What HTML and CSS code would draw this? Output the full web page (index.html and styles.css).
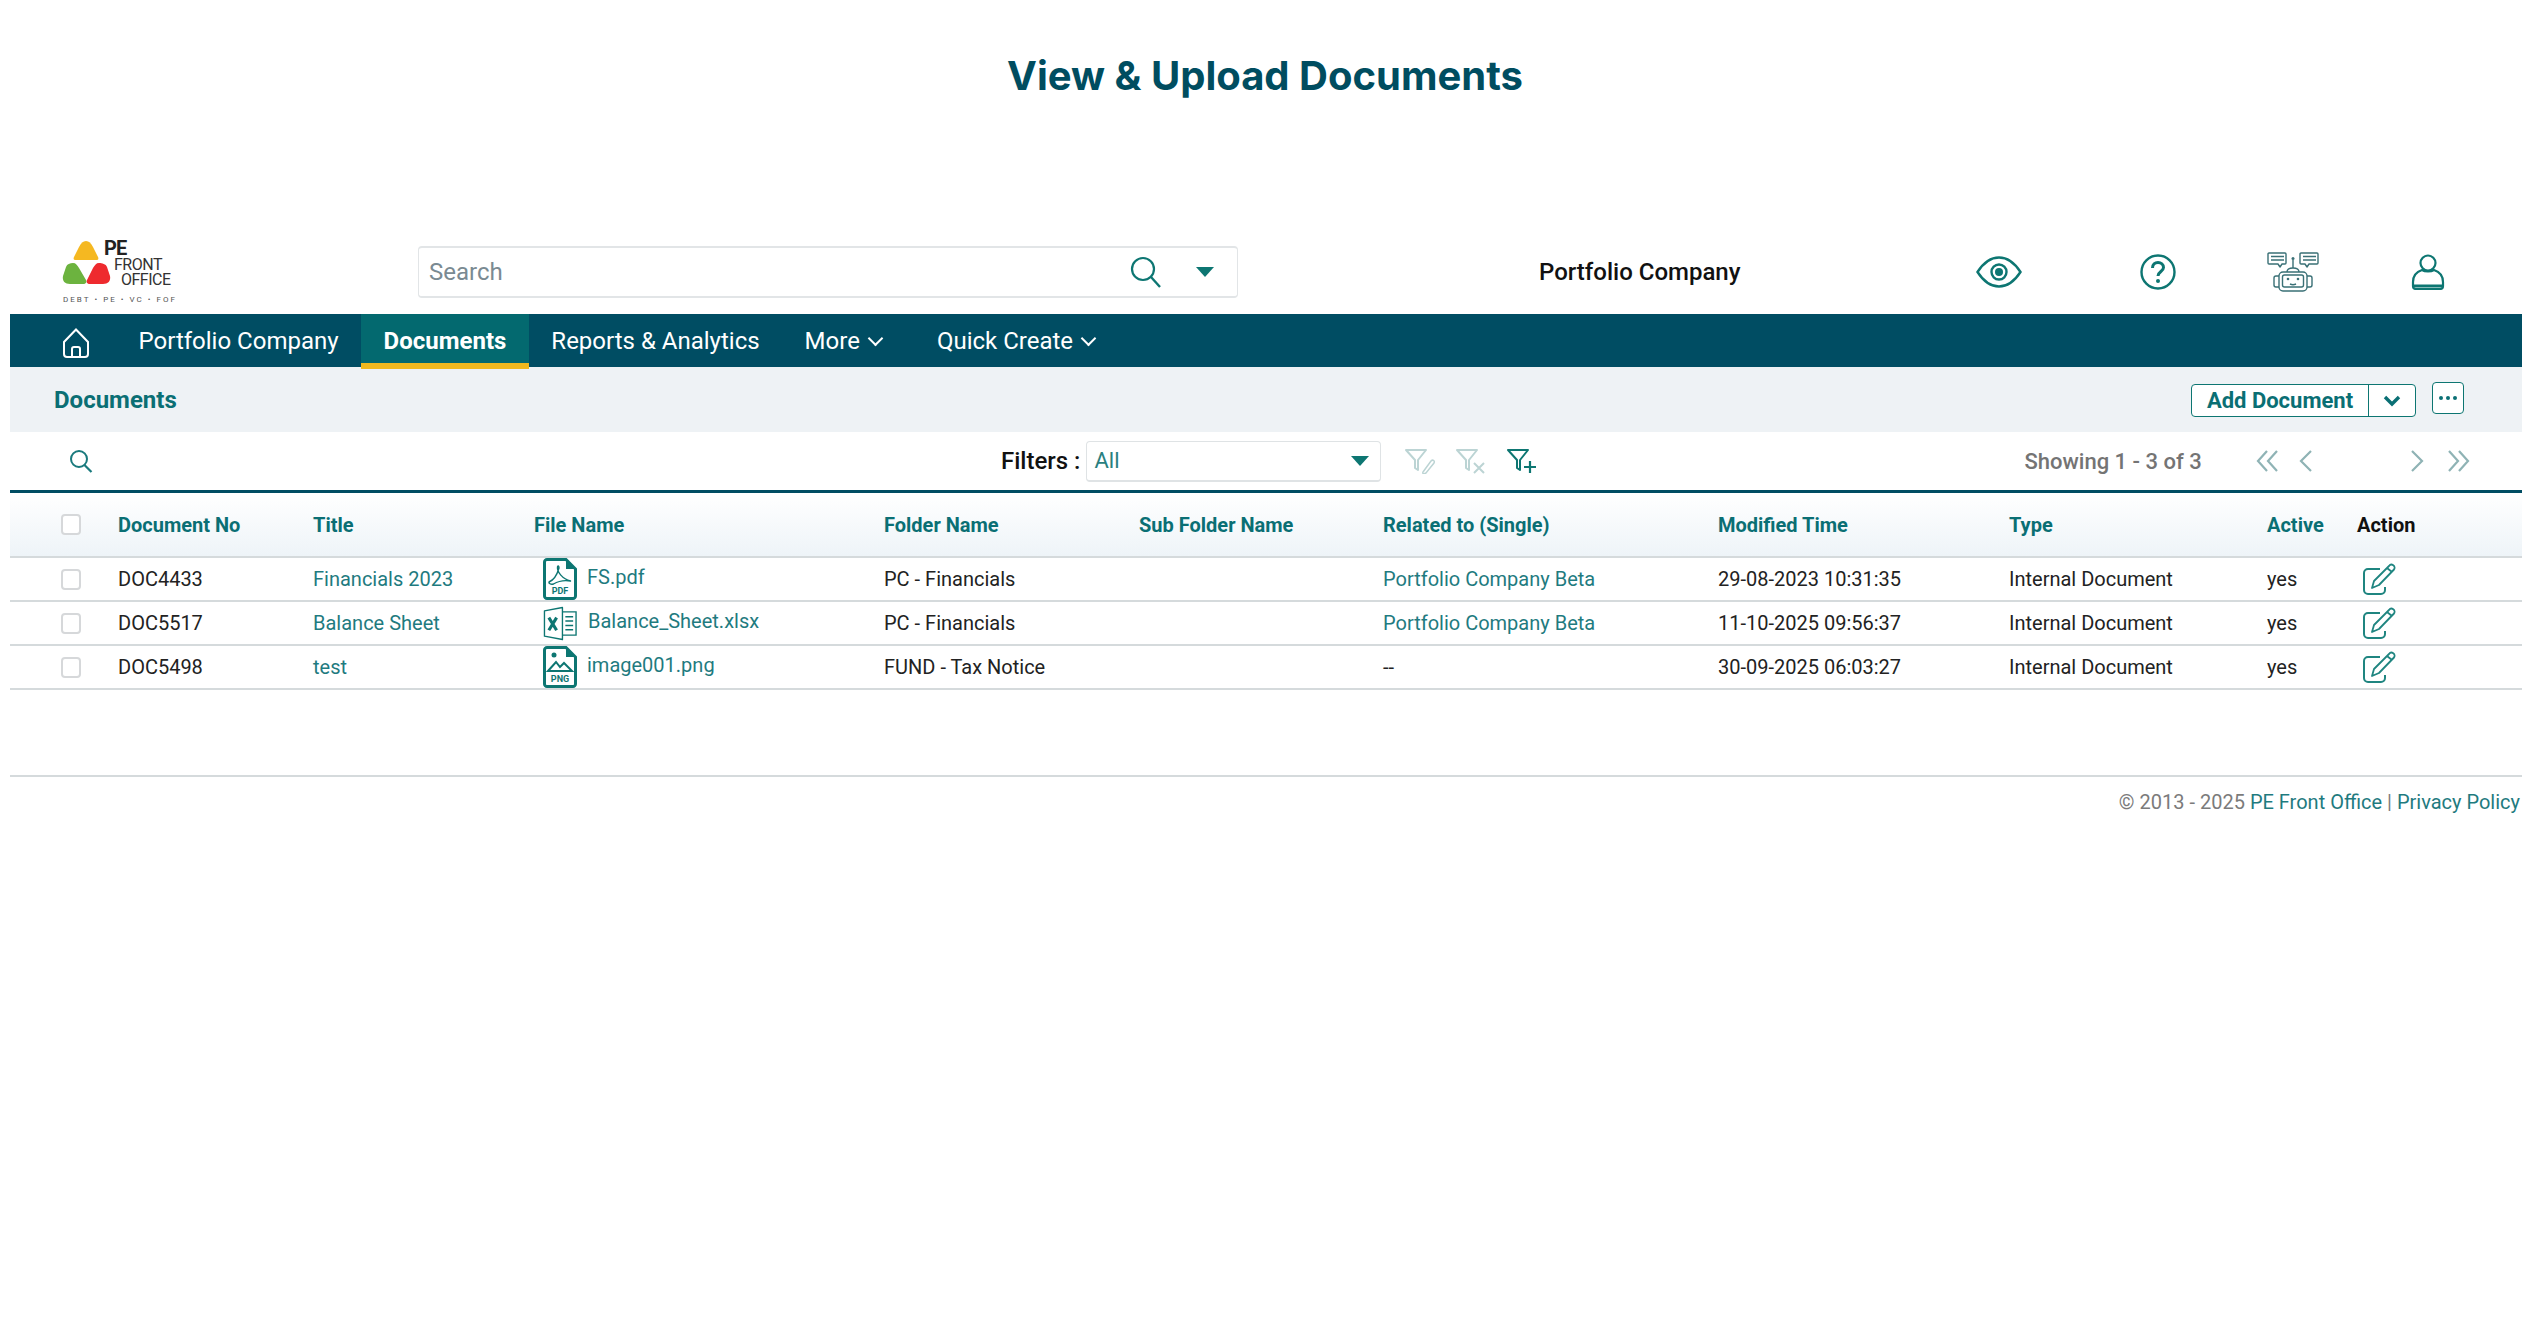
FILE: index.html
```html
<!DOCTYPE html>
<html lang="en">
<head>
    <meta charset="UTF-8">
    <title>View &amp; Upload Documents</title>
    <link rel="stylesheet" href="styles.css">
</head>
<body>
    <svg class="defs" width="0" height="0">
        <symbol id="i-edit" viewBox="0 0 34 32">
            <path d="M18 6H6a4 4 0 0 0-4 4v17a4 4 0 0 0 4 4h13a4 4 0 0 0 4-4v-3" fill="none" stroke="currentColor" stroke-width="2"/>
            <path d="M10 25l2-7L27 3a2.8 2.8 0 0 1 5 3.500L17 22z M25 5l5 4" fill="none" stroke="currentColor" stroke-width="1.800" stroke-linejoin="round"/>
        </symbol>
        <symbol id="i-filter" viewBox="0 0 26 24">
            <path d="M2 2h20l-8 10v10l-3-2v-8z" fill="none" stroke="currentColor" stroke-width="2" stroke-linejoin="round"/>
        </symbol>
    </svg>

    <h1 class="page-title">View &amp; Upload Documents</h1>

    <div class="app">
        <header class="topbar">
            <svg class="logo" viewBox="0 0 118 68" width="118" height="68">
                <path d="M26 3c3 0 5 2 7 6l5 10c1 2 0 3-2 3H16c-2 0-3-1-2-3l5-10c2-4 4-6 7-6z" fill="#f5b821"/>
                <path d="M13 25c3 0 4 2 6 5l7 12c1 2 0 4-3 4H10c-5 0-8-3-7-8l3-9c1-3 4-4 7-4z" fill="#6cb33f"/>
                <path d="M39 25c-3 0-4 2-6 5l-6 12c-1 2 0 4 3 4h13c5 0 8-3 7-8l-3-9c-1-3-5-4-8-4z" fill="#ee2a2e"/>
                <text x="44" y="17" class="logo-pe">PE</text>
                <text x="54" y="32" class="logo-front">FRONT</text>
                <text x="61" y="47" class="logo-front">OFFICE</text>
                <text x="3" y="64" class="logo-tag" textLength="112">DEBT • PE • VC • FOF</text>
            </svg>
            <div class="search-box">
                <span class="search-placeholder">Search</span>
                <svg class="search-icon" viewBox="0 0 32 32" width="32" height="32">
                    <circle cx="13" cy="13" r="11" fill="none" stroke="currentColor" stroke-width="2.200"/>
                    <path d="M21 21l9 10" stroke="currentColor" stroke-width="2.400"/>
                </svg>
                <span class="caret"></span>
            </div>
            <div class="module-name">Portfolio Company</div>
            <svg class="top-icon icon-eye" viewBox="0 0 46 32" width="46" height="32">
                <path d="M1.500 16C8 6 15 1.500 23 1.500S38 6 44.500 16C38 26 31 30.500 23 30.500S8 26 1.500 16z" fill="none" stroke="currentColor" stroke-width="2.400"/>
                <circle cx="23" cy="16" r="7.500" fill="none" stroke="currentColor" stroke-width="2.400"/>
                <circle cx="23" cy="16" r="4" fill="currentColor"/>
            </svg>
            <svg class="top-icon icon-help" viewBox="0 0 36 36" width="36" height="36">
                <circle cx="18" cy="18" r="16.500" fill="none" stroke="currentColor" stroke-width="2.400"/>
                <path d="M12.500 14c0-3.500 2.500-5.500 5.500-5.500s5.500 2 5.500 5c0 4-5.500 4-5.500 8.500" fill="none" stroke="currentColor" stroke-width="3"/>
                <circle cx="18" cy="27" r="2" fill="currentColor"/>
            </svg>
            <svg class="top-icon icon-bot" viewBox="0 0 52 40" width="52" height="40">
                <g fill="none" stroke="currentColor" stroke-width="1.400" stroke-linejoin="round">
                    <path d="M2 1h16a1 1 0 0 1 1 1v9a1 1 0 0 1-1 1h-3l-2 3-2-3H2a1 1 0 0 1-1-1V2a1 1 0 0 1 1-1z"/>
                    <path d="M34 1h16a1 1 0 0 1 1 1v9a1 1 0 0 1-1 1H42l-2 3-2-3h-4a1 1 0 0 1-1-1V2a1 1 0 0 1 1-1z"/>
                    <path d="M4 4.500h13M4 8h13M36 4.500h13M36 8h13"/>
                    <path d="M26 8v8"/>
                    <path d="M20 20c0-3 2-4 6-4s6 1 6 4"/>
                    <rect x="12" y="20" width="28" height="19" rx="4"/>
                    <rect x="15.500" y="23" width="21" height="12" rx="2"/>
                    <path d="M12 24H9a2 2 0 0 0-2 2v7a2 2 0 0 0 2 2h3M40 24h3a2 2 0 0 1 2 2v7a2 2 0 0 1-2 2h-3"/>
                    <path d="M23 32c2 1 4 1 6 0"/>
                </g>
                <circle cx="26" cy="6.500" r="1.500" fill="currentColor"/>
                <circle cx="21" cy="27" r="1.300" fill="currentColor"/>
                <circle cx="31" cy="27" r="1.300" fill="currentColor"/>
            </svg>
            <svg class="top-icon icon-user" viewBox="0 0 34 36" width="34" height="36">
                <circle cx="17" cy="9" r="7.500" fill="none" stroke="currentColor" stroke-width="2.200"/>
                <path d="M11 16c-6 2-9 6-9 12v4c0 2 1 3 3 3h24c2 0 3-1 3-3v-4c0-6-3-10-9-12-3 2-9 2-12 0z" fill="none" stroke="currentColor" stroke-width="2.200"/>
                <path d="M2 32h30" stroke="currentColor" stroke-width="3"/>
            </svg>
        </header>

        <nav class="mainnav">
            <a class="nav-home">
                <svg viewBox="0 0 28 30" width="28" height="30">
                    <path d="M14 1.500L2 14v12a3 3 0 0 0 3 3h18a3 3 0 0 0 3-3V14z" fill="none" stroke="#fff" stroke-width="2"/>
                    <path d="M10 29v-8a2 2 0 0 1 2-2h4a2 2 0 0 1 2 2v8" fill="none" stroke="#fff" stroke-width="2"/>
                </svg>
            </a>
            <a class="nav-item">Portfolio Company</a>
            <a class="nav-item active">Documents</a>
            <a class="nav-item">Reports &amp; Analytics</a>
            <a class="nav-item">More <i class="chev"></i></a>
            <a class="nav-item nav-quick">Quick Create <i class="chev"></i></a>
        </nav>

        <div class="subbar">
            <h2 class="subbar-title">Documents</h2>
            <div class="btn-group">
                <button class="btn-add">Add Document</button>
                <button class="btn-drop">
                    <svg viewBox="0 0 18 12" width="18" height="12"><path d="M2 2l7 7 7-7" fill="none" stroke="currentColor" stroke-width="3.400"/></svg>
                </button>
            </div>
            <button class="btn-more"><b></b><b></b><b></b></button>
        </div>

        <div class="filterbar">
            <svg class="filter-search" viewBox="0 0 24 24" width="24" height="24">
                <circle cx="10" cy="10" r="8" fill="none" stroke="currentColor" stroke-width="2"/>
                <path d="M15.500 16l7 7" stroke="currentColor" stroke-width="2.200"/>
            </svg>
            <label class="filter-label">Filters :</label>
            <div class="filter-select">
                <span>All</span>
                <span class="caret"></span>
            </div>
            <svg class="funnel muted" viewBox="0 0 32 26" width="32" height="26">
                <use href="#i-filter" width="26" height="24"/>
                <path d="M19 24l8-11c2-2 4 0 3 2l-8 10c-2 1-4 1-3-1z" fill="none" stroke="currentColor" stroke-width="1.500"/>
            </svg>
            <svg class="funnel muted" viewBox="0 0 32 26" width="32" height="26">
                <use href="#i-filter" width="26" height="24"/>
                <path d="M19 15l10 10M29 15L19 25" stroke="currentColor" stroke-width="2"/>
            </svg>
            <svg class="funnel" viewBox="0 0 32 26" width="32" height="26">
                <use href="#i-filter" width="26" height="24"/>
                <path d="M24 13v12M18 19h12" stroke="currentColor" stroke-width="2.200"/>
            </svg>
            <span class="showing">Showing 1 - 3 of 3</span>
            <div class="pager">
                <svg viewBox="0 0 24 24" width="24" height="24"><path d="M11 2L2 12l9 10M21 2l-9 10 9 10" fill="none" stroke="currentColor" stroke-width="2.200"/></svg>
                <svg viewBox="0 0 14 24" width="14" height="24"><path d="M12 2L2 12l10 10" fill="none" stroke="currentColor" stroke-width="2.200"/></svg>
                <svg class="pager-next" viewBox="0 0 14 24" width="14" height="24"><path d="M2 2l10 10L2 22" fill="none" stroke="currentColor" stroke-width="2.200"/></svg>
                <svg viewBox="0 0 24 24" width="24" height="24"><path d="M3 2l9 10-9 10M13 2l9 10-9 10" fill="none" stroke="currentColor" stroke-width="2.200"/></svg>
            </div>
        </div>

        <table class="doc-table">
            <colgroup>
                <col class="c-check"><col class="c-no"><col class="c-title"><col class="c-file"><col class="c-folder"><col class="c-sub"><col class="c-rel"><col class="c-mod"><col class="c-type"><col class="c-active"><col>
            </colgroup>
            <thead>
                <tr>
                    <th><span class="check"></span></th>
                    <th>Document No</th>
                    <th>Title</th>
                    <th>File Name</th>
                    <th>Folder Name</th>
                    <th>Sub Folder Name</th>
                    <th>Related to (Single)</th>
                    <th>Modified Time</th>
                    <th>Type</th>
                    <th>Active</th>
                    <th class="th-action">Action</th>
                </tr>
            </thead>
            <tbody>
                <tr>
                    <td><span class="check"></span></td>
                    <td>DOC4433</td>
                    <td><a>Financials 2023</a></td>
                    <td>
                        <div class="file-cell">
                            <svg class="file-icon" viewBox="0 0 34 42" width="34" height="42">
                                <path d="M4 1.500h19l9.500 9.500v27a2.500 2.500 0 0 1-2.500 2.500H4A2.500 2.500 0 0 1 1.500 38V4A2.500 2.500 0 0 1 4 1.500z" fill="none" stroke="currentColor" stroke-width="3"/>
                                <path d="M23 2v9h9z" fill="currentColor"/>
                                <path d="M6 24c5-2 8-7 10-14 0-2-1-3-1.500-1-.5 5 5 12 13 14-6-1-12 0-17 3-3 1-5-1-4.500-2z" fill="none" stroke="currentColor" stroke-width="1.400" stroke-linejoin="round"/>
                                <text x="17" y="36" class="file-tag">PDF</text>
                            </svg>
                            <a>FS.pdf</a>
                        </div>
                    </td>
                    <td>PC - Financials</td>
                    <td></td>
                    <td><a>Portfolio Company Beta</a></td>
                    <td>29-08-2023 10:31:35</td>
                    <td>Internal Document</td>
                    <td>yes</td>
                    <td><svg class="edit-icon" width="34" height="32"><use href="#i-edit"/></svg></td>
                </tr>
                <tr>
                    <td><span class="check"></span></td>
                    <td>DOC5517</td>
                    <td><a>Balance Sheet</a></td>
                    <td>
                        <div class="file-cell">
                            <svg class="file-icon" viewBox="0 0 36 36" width="35" height="35">
                                <path d="M20 1.500L1.500 5v26L20 34.500z" fill="none" stroke="currentColor" stroke-width="1.400" stroke-linejoin="round"/>
                                <path d="M20 6h14v24H20" fill="none" stroke="currentColor" stroke-width="1.400"/>
                                <path d="M23 11h8M23 15.500h8M23 20h8M23 24.500h8" stroke="currentColor" stroke-width="1.600"/>
                                <path d="M6 12l8 13M14 12L6 25" stroke="currentColor" stroke-width="3.200"/>
                            </svg>
                            <a>Balance_Sheet.xlsx</a>
                        </div>
                    </td>
                    <td>PC - Financials</td>
                    <td></td>
                    <td><a>Portfolio Company Beta</a></td>
                    <td>11-10-2025 09:56:37</td>
                    <td>Internal Document</td>
                    <td>yes</td>
                    <td><svg class="edit-icon" width="34" height="32"><use href="#i-edit"/></svg></td>
                </tr>
                <tr>
                    <td><span class="check"></span></td>
                    <td>DOC5498</td>
                    <td><a>test</a></td>
                    <td>
                        <div class="file-cell">
                            <svg class="file-icon" viewBox="0 0 34 42" width="34" height="42">
                                <path d="M4 1.500h19l9.500 9.500v27a2.500 2.500 0 0 1-2.500 2.500H4A2.500 2.500 0 0 1 1.500 38V4A2.500 2.500 0 0 1 4 1.500z" fill="none" stroke="currentColor" stroke-width="3"/>
                                <path d="M23 2v9h9z" fill="currentColor"/>
                                <circle cx="11" cy="9" r="2.500" fill="currentColor"/>
                                <path d="M5 25l8-9 4 5 4-4 8 8z" fill="none" stroke="currentColor" stroke-width="2"/>
                                <text x="17" y="36" class="file-tag">PNG</text>
                            </svg>
                            <a>image001.png</a>
                        </div>
                    </td>
                    <td>FUND - Tax Notice</td>
                    <td></td>
                    <td>--</td>
                    <td>30-09-2025 06:03:27</td>
                    <td>Internal Document</td>
                    <td>yes</td>
                    <td><svg class="edit-icon" width="34" height="32"><use href="#i-edit"/></svg></td>
                </tr>
            </tbody>
        </table>

        <footer class="footer">© 2013 - 2025 <a>PE Front Office</a> | <a>Privacy Policy</a></footer>
    </div>
</body>
</html>
```

FILE: styles.css
```css
body {
    margin: 0;
    background: #fff;
    font-family: Roboto, "Liberation Sans", sans-serif;
    color: #1c1c1c;
}
.defs {
    position: absolute;
}
.page-title {
    margin: 0;
    height: 230px;
    padding-top: 50px;
    box-sizing: border-box;
    text-align: center;
    font-family: Inter, Roboto, sans-serif;
    font-size: 40px;
    line-height: 52px;
    font-weight: 700;
    color: #004d60;
}
.app {
    margin: 0 8px 0 10px;
}

/* top header */
.topbar {
    display: flex;
    align-items: center;
    height: 84px;
}
.logo {
    margin-left: 50px;
    flex: none;
}
.logo-pe {
    font-size: 20px;
    font-weight: 700;
    fill: #222;
    letter-spacing: -1px;
}
.logo-front {
    font-size: 16px;
    fill: #333;
    letter-spacing: -0.500px;
}
.logo-tag {
    font-size: 8px;
    fill: #555;
}
.search-box {
    display: flex;
    align-items: center;
    margin-left: 240px;
    width: 820px;
    height: 52px;
    box-sizing: border-box;
    padding: 0 23px 0 10px;
    border: 1px solid #e2e5e7;
    border-top-width: 2px;
    border-bottom-width: 2px;
    border-radius: 4px;
    background: #fff;
}
.search-placeholder {
    flex: 1;
    font-size: 24px;
    color: #7a8a92;
}
.search-icon {
    color: #0d7672;
    margin-right: 34px;
}
.caret {
    display: inline-block;
    width: 0;
    height: 0;
    border-left: 9px solid transparent;
    border-right: 9px solid transparent;
    border-top: 10px solid #0d7672;
}
.module-name {
    margin-left: 301px;
    font-size: 24px;
    font-weight: 500;
    color: #111;
    white-space: nowrap;
}
.top-icon {
    flex: none;
    color: #0d7672;
}
.icon-eye {
    margin-left: 236px;
}
.icon-help {
    margin-left: 118px;
}
.icon-bot {
    margin-left: 91px;
    color: #3a7076;
}
.icon-user {
    margin-left: 92px;
}

/* main nav */
.mainnav {
    display: flex;
    height: 53px;
    background: #004d63;
}
.nav-home {
    display: flex;
    align-items: center;
    width: 106px;
    padding-left: 52px;
    padding-top: 4px;
    box-sizing: border-box;
}
.nav-item {
    position: relative;
    display: flex;
    align-items: center;
    padding: 0 22.500px;
    font-size: 24px;
    color: #fff;
}
.nav-item.active {
    background: #03696f;
    font-weight: 700;
}
.nav-item.active::after {
    content: "";
    position: absolute;
    left: 0;
    right: 0;
    bottom: -2px;
    height: 6px;
    background: #f0b91f;
}
.nav-quick {
    margin-left: 9px;
}
.chev {
    display: inline-block;
    width: 9px;
    height: 9px;
    margin: -4px 2px 0 10px;
    border-right: 2.500px solid #fff;
    border-bottom: 2.500px solid #fff;
    transform: rotate(45deg);
}

/* sub header */
.subbar {
    display: flex;
    align-items: center;
    height: 65px;
    background: #eef2f5;
    padding: 0 58px 0 44px;
}
.subbar-title {
    margin: 0;
    flex: 1;
    font-size: 24px;
    font-weight: 700;
    color: #0a6f74;
}
.btn-group {
    display: flex;
    height: 31px;
    border: 1px solid #0d7672;
    border-radius: 4px;
    background: #fff;
    margin-top: 2px;
}
.btn-add,
.btn-drop {
    padding: 0;
    border: none;
    background: none;
    color: #0a6f74;
    font-family: inherit;
}
.btn-add {
    width: 176px;
    font-size: 22px;
    font-weight: 700;
}
.btn-drop {
    width: 47px;
    border-left: 1px solid #0d7672;
    padding-top: 4px;
}
.btn-more {
    display: flex;
    justify-content: center;
    align-items: center;
    gap: 3px;
    width: 32px;
    height: 32px;
    margin: -4px 0 0 16px;
    padding: 0;
    border: 1px solid #0d7672;
    border-radius: 4px;
    background: #fff;
}
.btn-more b {
    width: 4px;
    height: 4px;
    border-radius: 50%;
    background: #0a6f74;
}

/* filter row */
.filterbar {
    display: flex;
    align-items: center;
    height: 58px;
    border-bottom: 3px solid #004d63;
}
.filter-search {
    margin-left: 59px;
    color: #1a7a7d;
}
.filter-label {
    margin-left: 908px;
    font-size: 24px;
    font-weight: 500;
    color: #111;
}
.filter-select {
    display: flex;
    align-items: center;
    justify-content: space-between;
    width: 295px;
    height: 41px;
    box-sizing: border-box;
    margin-left: 6px;
    padding: 0 11px 0 7px;
    border: 1px solid #dfe3e5;
    border-bottom-width: 2px;
    border-radius: 4px;
    font-size: 22px;
    color: #2a7f80;
}
.funnel {
    color: #0d7672;
    margin-left: 19px;
    flex: none;
}
.filter-select + .funnel {
    margin-left: 23px;
}
.funnel.muted {
    color: #bcd4d4;
}
.showing {
    margin-left: 486px;
    font-size: 22px;
    font-weight: 500;
    color: #747474;
    white-space: nowrap;
}
.pager {
    display: flex;
    align-items: center;
    margin-left: 54px;
    color: #8fb3b5;
}
.pager svg + svg {
    margin-left: 19px;
}
.pager .pager-next {
    margin-left: 97px;
}
.pager .pager-next + svg {
    margin-left: 22px;
}

/* table */
.doc-table {
    width: 100%;
    border-collapse: collapse;
    table-layout: fixed;
    font-size: 20px;
}
.c-check { width: 108px; }
.c-no { width: 195px; }
.c-title { width: 221px; }
.c-file { width: 350px; }
.c-folder { width: 255px; }
.c-sub { width: 244px; }
.c-rel { width: 335px; }
.c-mod { width: 291px; }
.c-type { width: 258px; }
.c-active { width: 90px; }
.doc-table th {
    height: 64px;
    padding: 0;
    text-align: left;
    font-weight: 700;
    color: #0a6f74;
    background: linear-gradient(#fff, #eef4f8);
    border-bottom: 2px solid #d5dadc;
    box-sizing: border-box;
}
.doc-table th.th-action {
    color: #111;
}
.doc-table td {
    height: 43.500px;
    padding: 0;
    border-bottom: 2px solid #d5dadc;
    box-sizing: border-box;
    color: #222;
    white-space: nowrap;
}
.doc-table a {
    color: #1f7b7f;
}
.check {
    display: block;
    width: 20px;
    height: 21px;
    margin-left: 51px;
    box-sizing: border-box;
    border: 2px solid #d6d8da;
    border-radius: 4px;
    background: #fff;
}
.file-cell {
    display: flex;
    align-items: center;
    gap: 10px;
    height: 42px;
    margin-left: 9px;
}
.file-cell a {
    margin-bottom: 4px;
}
.file-icon {
    flex: none;
    color: #0d7672;
}
.file-tag {
    font-size: 9px;
    font-weight: 700;
    fill: currentColor;
    text-anchor: middle;
}
.edit-icon {
    display: block;
    margin-left: 5px;
    color: #1f8580;
}

/* footer */
.footer {
    margin-top: 85px;
    padding: 13px 2px 0 0;
    border-top: 2px solid #d5dadc;
    text-align: right;
    font-size: 20px;
    color: #7b7b7b;
}
.footer a {
    color: #1f7b7f;
}
```
